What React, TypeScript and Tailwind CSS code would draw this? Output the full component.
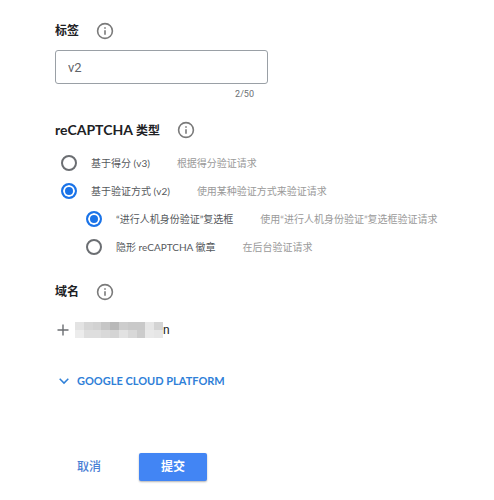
import { useState } from "react";

const MOSAIC = [
    ["#e3e3e3", "#d6d6d6", "#d2d2d2", "#c6c6c6", "#b9b9b9", "#cdcdcd", "#c9c9c9", "#c9c9c9", "#e6e6e6", "#d4d4d4"],
    ["#ececec", "#dedede", "#dedede", "#d9d9d9", "#d4d4d4", "#e2e2e2", "#d8d8d8", "#cccccc", "#e9e9e9", "#e6e6e6"],
];

function InfoIcon() {
    return (
        <svg className="size-4.5" viewBox="0 0 18 18" fill="none" stroke="#7a7a7a" strokeWidth="1.6" aria-hidden="true">
            <circle cx="9" cy="9" r="7.4" />
            <path d="M9 8.2v4.6" />
            <path d="M9 5.2v1.6" />
        </svg>
    );
}

function Heading({ children }: { children: React.ReactNode }) {
    return (
        <div className="flex h-5 items-center gap-[17px]">
            <h2 className="text-[12px] leading-5 font-bold text-[#202124]">{children}</h2>
            <button type="button" aria-label="info">
                <InfoIcon />
            </button>
        </div>
    );
}

type OptionProps = {
    name: string;
    label: string;
    hint: string;
    checked: boolean;
    onChange: () => void;
};

function Option({ name, label, hint, checked, onChange }: OptionProps) {
    return (
        <label className="flex h-7 items-center whitespace-nowrap text-[10px] text-[#55585c]">
            <input
                type="radio"
                name={name}
                checked={checked}
                onChange={onChange}
                className="size-4 shrink-0 appearance-none rounded-full border-2 border-[#6b6e72] bg-white checked:border-[#1a73e8] checked:bg-[#1a73e8] checked:shadow-[inset_0_0_0_2px_white]"
            />
            <span className="ml-3.5">{label}</span>
            <span className="ml-[27px] text-[#9a9a9a]">{hint}</span>
        </label>
    );
}

export default function App() {
    const [label, setLabel] = useState("v2");
    const [version, setVersion] = useState("v2");
    const [kind, setKind] = useState("checkbox");

    return (
        <form
            className="bg-white px-[55px] pt-[21px] pb-4 font-['Lato','Noto_Sans_CJK_SC',sans-serif]"
            onSubmit={(e) => e.preventDefault()}
        >
            <Heading>
                <label htmlFor="label">标签</label>
            </Heading>
            <input
                id="label"
                type="text"
                maxLength={50}
                value={label}
                onChange={(e) => setLabel(e.target.value)}
                className="mt-[9px] block h-[34px] w-full max-w-[213px] rounded-[3px] border border-[#9aa0a6] px-3 font-['Roboto',sans-serif] text-[13px] text-[#5f6368] outline-none focus:border-[#1a73e8]"
            />
            <div className="max-w-[213px] pr-3.5 text-right font-['Roboto',sans-serif] text-[9px] leading-5 text-[#6b6f73]">
                {label.length}/50
            </div>

            <div className="mt-4">
                <Heading>
                    <span className="text-[14px]">reCAPTCHA</span> 类型
                </Heading>
            </div>
            <div className="mt-[9px] pl-1.5">
                <Option name="version" label="基于得分 (v3)" hint="根据得分验证请求" checked={version === "v3"} onChange={() => setVersion("v3")} />
                <Option name="version" label="基于验证方式 (v2)" hint="使用某种验证方式来验证请求" checked={version === "v2"} onChange={() => setVersion("v2")} />
                <div className="pl-[25px]">
                    <Option name="kind" label="“进行人机身份验证”复选框" hint="使用“进行人机身份验证”复选框验证请求" checked={kind === "checkbox"} onChange={() => setKind("checkbox")} />
                    <Option name="kind" label="隐形 reCAPTCHA 徽章" hint="在后台验证请求" checked={kind === "invisible"} onChange={() => setKind("invisible")} />
                </div>
            </div>

            <div className="mt-[21px]">
                <Heading>域名</Heading>
            </div>
            <div className="mt-[18px] flex h-5 items-center">
                <svg className="size-4" viewBox="0 0 16 16" stroke="#6b6e72" strokeWidth="1.4" aria-hidden="true">
                    <path d="M8 2.5v11M2.5 8h11" />
                </svg>
                <div className="ml-1 grid h-4 w-[88px] grid-cols-10 grid-rows-2">
                    {MOSAIC.flat().map((color, i) => (
                        <span key={i} style={{ backgroundColor: color }} />
                    ))}
                </div>
                <span className="font-['Roboto',sans-serif] text-[12px] text-[#202124]">n</span>
            </div>

            <button type="button" className="mt-[31px] flex h-5 items-center gap-2 pl-1 text-[11px] font-bold text-[#2f80d8]">
                <svg className="size-2.5" viewBox="0 0 10 10" fill="none" stroke="currentColor" strokeWidth="1.5" aria-hidden="true">
                    <path d="M.7 2.8 5 7.1l4.3-4.3" />
                </svg>
                GOOGLE CLOUD PLATFORM
            </button>

            <div className="mt-[62px] flex h-7 items-center">
                <button type="button" className="h-7 w-[68px] text-[12px] font-medium text-[#4a80d4]">
                    取消
                </button>
                <button type="submit" className="ml-4 h-7 w-[68px] rounded-[2px] bg-[#4285f4] text-[12px] font-bold text-white shadow-[0_1px_2px_rgba(0,0,0,0.3)]">
                    提交
                </button>
            </div>
        </form>
    );
}
